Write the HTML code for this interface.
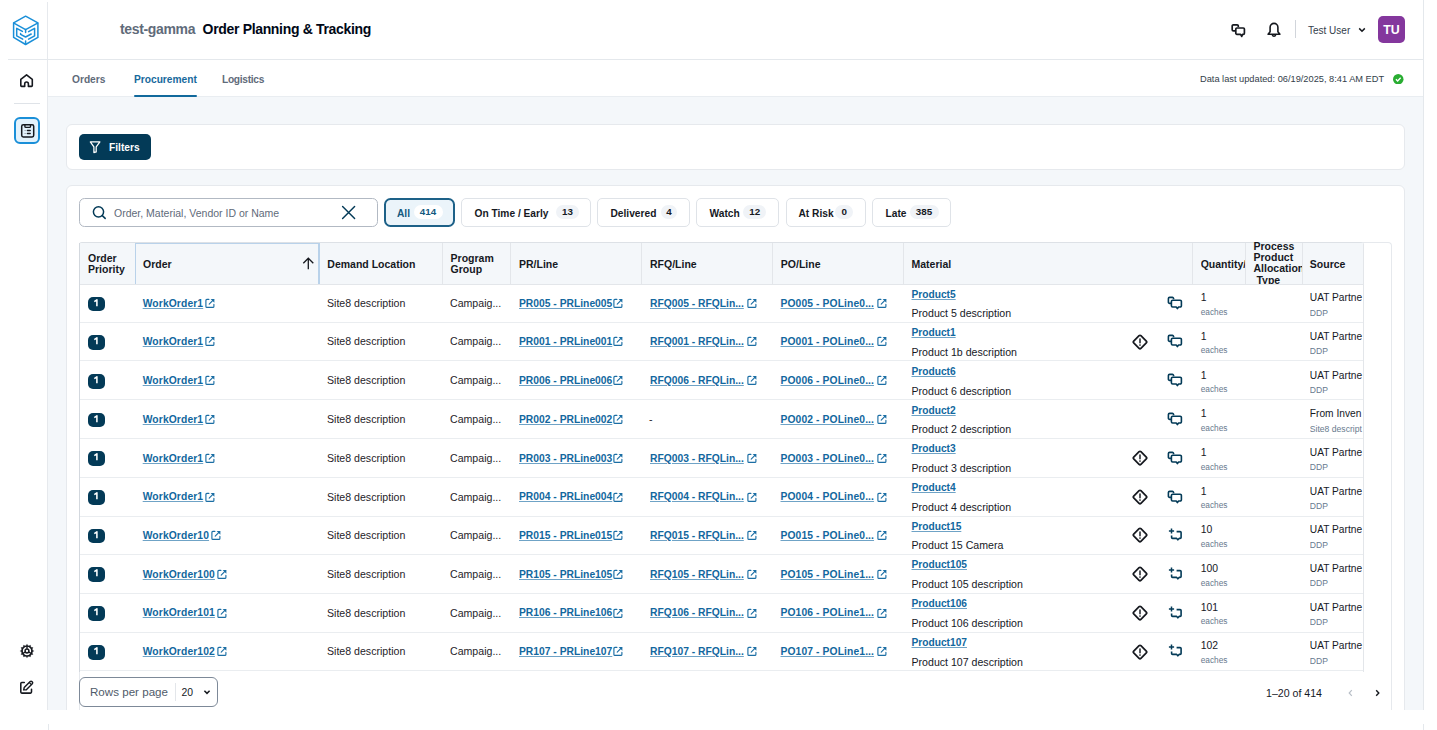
<!DOCTYPE html>
<html><head><meta charset="utf-8">
<style>
*{box-sizing:border-box;margin:0;padding:0}
html,body{width:1437px;height:730px;overflow:hidden;background:#fff;font-family:"Liberation Sans",sans-serif;color:#16191f}
.abs{position:absolute}
a{text-decoration:none}
#side{position:absolute;left:0;top:2px;width:48px;height:708px;background:#fff;border-right:1px solid #e6e9ed}
#hdr{position:absolute;left:48px;top:0;width:1375px;height:60px;background:#fff}
#hline{position:absolute;left:8px;top:59px;width:1415px;height:1px;background:#e4e8ec}
#rline{position:absolute;left:1423px;top:0;width:1px;height:710px;background:#e4e8ec}
#tabs{position:absolute;left:48px;top:60px;width:1375px;height:36px;background:#fff}
#gray{position:absolute;left:48px;top:96px;width:1375px;height:614px;background:#f4f7fa;border-top:1px solid #e9edf1}
.card{position:absolute;background:#fff;border:1px solid #e6e9ed;border-radius:6px}
.tab{position:absolute;top:74px;font-size:10.2px;font-weight:700;line-height:12px;color:#5f6b7a;white-space:nowrap}
.chip{position:absolute;top:198px;height:29px;border:1px solid #dfe3e8;border-radius:5px;background:#fff}
.chip .t{position:absolute;top:9px;font-size:10.2px;font-weight:700;line-height:12px;color:#16191f;white-space:nowrap}
.chip .b{position:absolute;top:5.6px;height:14px;border-radius:7px;background:#f0f3f7;font-size:9.8px;font-weight:700;line-height:14px;text-align:center;color:#16191f}
#tbl{position:absolute;left:79px;top:242px;width:1285px;height:430px;overflow:hidden;border-left:1px solid #dde1e6;border-right:1px solid #e3e6ea;border-top-left-radius:3px;border-top-right-radius:3px}
#outer{position:absolute;left:79px;top:242px;width:1313px;height:468px;border:1px solid #e6e9ed;border-bottom:none;border-radius:4px 4px 0 0}
#thead{position:absolute;left:0;top:0;width:1284px;height:43px;background:#f4f7fa;border-top:1px solid #dde1e6;border-bottom:1px solid #e3e6ea}
.cb{position:absolute;top:0;width:1px;height:43px;background:#e3e6ea}
.th{position:absolute;font-size:10.5px;font-weight:700;line-height:11.5px;color:#16191f;white-space:nowrap}
.row{position:absolute;left:79px;width:1284px;border-bottom:1px solid #eaedf0;background:#fff}
.badge{position:absolute;left:8.5px;top:calc(50% - 6.4px);width:17px;height:14.6px;border-radius:5px;background:#033a57;color:#fff;font-size:9.5px;font-weight:700;line-height:14.6px;text-align:center}
.lk{position:absolute;top:calc(50% - 5.2px);font-size:10.3px;font-weight:700;line-height:12px;color:#12679e;text-decoration:underline;text-decoration-thickness:1px;text-underline-offset:0.6px;text-decoration-color:#6fa3c6;white-space:nowrap}
.exti{position:absolute;top:calc(50% - 5px);width:10px;height:10px;color:#1b6ea4}
.exti svg{display:block}
.tx{position:absolute;top:calc(50% - 6px);font-size:10.6px;line-height:12px;color:#1f2329;white-space:nowrap}
.mat{position:absolute;left:832.5px;top:0;height:100%;width:300px}
.lk2{position:absolute;left:0;top:calc(50% - 14.3px);font-size:10.2px;font-weight:700;line-height:12px;color:#12679e;text-decoration:underline;text-decoration-thickness:1px;text-underline-offset:0.6px;text-decoration-color:#6fa3c6;white-space:nowrap}
.desc{position:absolute;left:0;top:calc(50% + 4.2px);font-size:10.6px;line-height:12px;color:#16191f;white-space:nowrap}
.dia{position:absolute;left:1052.5px;top:calc(50% - 7.8px);width:16px;height:16px}
.ic{position:absolute;left:1088px;top:calc(50% - 8px);width:16px;height:16px}
.qty{position:absolute;left:1121.7px;top:0;height:100%;width:50px}
.q1{position:absolute;left:0;top:calc(50% - 10.9px);font-size:10.4px;line-height:12px;color:#16191f;white-space:nowrap}
.q2{position:absolute;left:0;top:calc(50% + 2.9px);font-size:8.3px;line-height:12px;color:#687a8e;white-space:nowrap}
.src{position:absolute;left:1230.8px;top:0;height:100%;width:53px;overflow:hidden}
.s1{position:absolute;left:0;top:calc(50% - 10.9px);font-size:10.2px;line-height:12px;color:#16191f;white-space:nowrap}
.s2{position:absolute;left:0;top:calc(50% + 3.4px);font-size:8.6px;line-height:12px;color:#687a8e;white-space:nowrap}
</style></head><body>

<!-- sidebar -->
<div id="side"></div>
<div id="hdr"></div>
<div id="hline"></div>
<div id="rline"></div>
<div id="tabs"></div>
<div id="gray"></div>
<div class="abs" style="left:48px;top:724px;width:1px;height:6px;background:#e4e8ec"></div>
<div class="abs" style="left:1423px;top:724px;width:1px;height:6px;background:#e4e8ec"></div>

<!-- logo -->
<svg class="abs" style="left:12px;top:14px" width="28" height="33" viewBox="12 14 28 33">
 <g fill="none" stroke="#1a8fd8" stroke-width="1.5" stroke-linejoin="round" stroke-linecap="round">
  <path d="M25.6 16.2L37.9 22.8V37.4L25.6 44.5L13.6 37.4V22.8Z"/>
  <path d="M13.9 23.2L25.6 29.6L37.6 23.2"/>
  <path d="M25.6 29.6V32.4M25.6 40.9V44.3"/>
  <path d="M22.4 31.4L16.7 28.3V35.8L22.7 39.2"/>
  <path d="M28.6 31.7L34.6 28.3V35.8L28.6 39.2"/>
  <path d="M20.6 33.5V34.3L25.6 37L31.2 34"/>
 </g>
</svg>
<!-- home -->
<svg class="abs" style="left:18px;top:72px" width="17" height="17" viewBox="0 0 17 17">
 <path d="M2.8 7.4L8.55 2.9L14.3 7.4V13.6A0.8 0.8 0 0 1 13.5 14.4H10.4V11.9A1.85 1.85 0 0 0 6.7 11.9V14.4H3.6A0.8 0.8 0 0 1 2.8 13.6Z" fill="none" stroke="#16191f" stroke-width="1.6" stroke-linejoin="round"/>
</svg>
<div class="abs" style="left:14px;top:103px;width:26px;height:1px;background:#dfe3e8"></div>
<div class="abs" style="left:14px;top:117px;width:26px;height:27px;border:2px solid #1a8fd8;border-radius:6px;background:#e3f2fc"></div>
<svg class="abs" style="left:19px;top:122px" width="17" height="17" viewBox="0 0 17 17">
 <rect x="2.7" y="2.7" width="12" height="12.2" rx="1.6" fill="none" stroke="#16191f" stroke-width="1.5"/>
 <path d="M5.9 2V4.4A1 1 0 0 0 6.9 5.4H10.5A1 1 0 0 0 11.5 4.4V2" fill="none" stroke="#16191f" stroke-width="1.4"/>
 <path d="M5.6 8.5H6.6M5.6 11.5H6.6" stroke="#8a9099" stroke-width="1.2"/>
 <path d="M8.4 8.5H11.2M8.4 11.5H11.2" stroke="#16191f" stroke-width="1.4" stroke-linecap="round"/>
</svg>
<!-- gear -->
<svg class="abs" style="left:18.85px;top:643.4px" width="16" height="16" viewBox="0 0 16 16">
 <path d="M6.97 2.70L8.00 0.70L9.03 2.70ZM9.76 2.89L11.65 1.68L11.54 3.92ZM12.08 4.46L14.32 4.35L13.11 6.24ZM13.30 6.97L15.30 8.00L13.30 9.03ZM13.11 9.76L14.32 11.65L12.08 11.54ZM11.54 12.08L11.65 14.32L9.76 13.11ZM9.03 13.30L8.00 15.30L6.97 13.30ZM6.24 13.11L4.35 14.32L4.46 12.08ZM3.92 11.54L1.68 11.65L2.89 9.76ZM2.70 9.03L0.70 8.00L2.70 6.97ZM2.89 6.24L1.68 4.35L3.92 4.46ZM4.46 3.92L4.35 1.68L6.24 2.89Z" fill="#16191f"/>
 <circle cx="8" cy="8" r="5" fill="none" stroke="#16191f" stroke-width="1.7"/>
 <circle cx="8" cy="8" r="1.9" fill="none" stroke="#16191f" stroke-width="1.5"/>
 <path d="M8.00 5.80L8.00 3.00M6.09 9.10L3.67 10.50M9.91 9.10L12.33 10.50" stroke="#16191f" stroke-width="1.4"/>
</svg>
<!-- edit -->
<svg class="abs" style="left:19px;top:679px" width="16" height="16" viewBox="0 0 16 16">
 <path d="M5.3 3.4H2.8A1 1 0 0 0 1.8 4.4V13.1A1 1 0 0 0 2.8 14.1H11.5A1 1 0 0 0 12.5 13.1V10.2" fill="none" stroke="#16191f" stroke-width="1.55" stroke-linecap="round"/>
 <path d="M4.7 10.9L5.2 8.6L11.2 2.6A1.2 1.2 0 0 1 12.9 2.6L13.3 3A1.2 1.2 0 0 1 13.3 4.7L7.3 10.7Z" fill="none" stroke="#16191f" stroke-width="1.45" stroke-linejoin="round"/>
 <path d="M10.3 3.5L12.4 5.6" stroke="#16191f" stroke-width="1.2"/>
</svg>

<!-- header title -->
<div class="abs" style="left:120px;top:21.2px;font-size:14px;font-weight:700;line-height:16px;letter-spacing:-0.35px;white-space:nowrap"><span style="color:#5f6b7a">test-gamma</span><span style="display:inline-block;width:7.5px"></span><span style="color:#000716;letter-spacing:-0.33px">Order Planning &amp; Tracking</span></div>

<!-- header right -->
<svg class="abs" style="left:1230px;top:22px" width="17" height="17" viewBox="0 0 17 17">
 <path d="M8.3 5.1V4A1.2 1.2 0 0 0 7.1 2.8H3.4A1.2 1.2 0 0 0 2.2 4V7.7A1.2 1.2 0 0 0 3.4 8.9H5.6" fill="none" stroke="#16191f" stroke-width="1.7"/>
 <path d="M6.9 6H13.3A1.1 1.1 0 0 1 14.4 7.1V11.2A1.1 1.1 0 0 1 13.3 12.3H12.6L11.7 14.4L10.6 12.3H6.9A1.1 1.1 0 0 1 5.8 11.2V7.1A1.1 1.1 0 0 1 6.9 6Z" fill="none" stroke="#16191f" stroke-width="1.7" stroke-linejoin="round"/>
</svg>
<svg class="abs" style="left:1266px;top:21.6px" width="16" height="17" viewBox="0 0 16 17">
 <path d="M8 1.4A3.9 3.9 0 0 0 4.1 5.3V9.7L2.1 12.2H13.9L11.9 9.7V5.3A3.9 3.9 0 0 0 8 1.4Z" fill="none" stroke="#16191f" stroke-width="1.6" stroke-linejoin="round"/>
 <path d="M6.3 13.1A1.8 1.8 0 0 0 9.7 13.1" fill="none" stroke="#16191f" stroke-width="1.6"/>
</svg>
<div class="abs" style="left:1295px;top:20px;width:1px;height:18px;background:#d1d5db"></div>
<div class="abs" style="left:1308px;top:24.6px;font-size:10px;line-height:12px;color:#333d4b;white-space:nowrap">Test User</div>
<svg class="abs" style="left:1358px;top:27px" width="8" height="6" viewBox="0 0 8 6"><path d="M1.2 1.4L4 4.2L6.8 1.4" fill="none" stroke="#16191f" stroke-width="1.5"/></svg>
<div class="abs" style="left:1378px;top:16px;width:27px;height:27px;border-radius:5px;background:#84379d;color:#fff;font-size:12.4px;font-weight:700;line-height:29px;text-align:center;overflow:hidden">TU</div>

<!-- tabs -->
<div class="tab" style="left:72px">Orders</div>
<div class="tab" style="left:134px;color:#17699c">Procurement</div>
<div class="abs" style="left:134px;top:94.8px;width:63px;height:2px;border-radius:1px;background:#11699c"></div>
<div class="tab" style="left:222px;letter-spacing:-0.3px">Logistics</div>
<div class="abs" style="left:1200px;top:73px;font-size:9.25px;line-height:12px;color:#333e4a;white-space:nowrap">Data last updated: 06/19/2025, 8:41 AM EDT</div>
<svg class="abs" style="left:1393px;top:73.5px" width="10.5" height="10.5" viewBox="0 0 10 10"><circle cx="5" cy="5" r="5" fill="#29ad32"/><path d="M2.8 5.1L4.4 6.6L7.3 3.6" fill="none" stroke="#fff" stroke-width="1.3"/></svg>

<!-- filter card -->
<div class="card" style="left:66px;top:124px;width:1339px;height:46px"></div>
<div class="abs" style="left:79px;top:134px;width:72px;height:26px;border-radius:5px;background:#033a57"></div>
<svg class="abs" style="left:88px;top:140px" width="14" height="14" viewBox="0 0 14 14"><path d="M2.3 1.9H11.9L8.2 6.9V11.9L5.9 12.6V6.9Z" fill="none" stroke="#fff" stroke-width="1.25" stroke-linejoin="round"/></svg>
<div class="abs" style="left:109px;top:142px;font-size:10.2px;font-weight:700;line-height:12px;color:#fff">Filters</div>

<!-- table card -->
<div class="card" style="left:66px;top:185px;width:1339px;height:560px"></div>
<div class="abs" style="left:79px;top:198px;width:299px;height:29.4px;border:1px solid #b2b9c3;border-radius:5.5px;background:#fff"></div>
<svg class="abs" style="left:91.5px;top:205px" width="15" height="15" viewBox="0 0 15 15"><circle cx="6.5" cy="6.8" r="5.1" fill="none" stroke="#033a57" stroke-width="1.5"/><path d="M10.3 10.6L13.2 13.4" stroke="#033a57" stroke-width="1.5" stroke-linecap="round"/></svg>
<div class="abs" style="left:114px;top:207px;font-size:10.5px;line-height:12px;color:#5f6b7a;white-space:nowrap">Order, Material, Vendor ID or Name</div>
<svg class="abs" style="left:341px;top:204.6px" width="15" height="15" viewBox="0 0 15 15"><path d="M1.6 1.6L13.6 13.6M13.6 1.6L1.6 13.6" stroke="#033a57" stroke-width="1.45" stroke-linecap="round"/></svg>

<div class="chip" style="left:384px;width:71px;border:2px solid #1d6188;border-radius:6.5px;background:#ebf4fa"><span class="t" style="left:11px;top:8px;color:#145a7f">All</span><span class="b" style="left:27.5px;top:4.5px;width:29px;background:#fff;color:#145a7f">414</span></div>
<div class="chip" style="left:461px;width:130px"><span class="t" style="left:12.5px">On Time / Early</span><span class="b" style="left:94px;width:23px">13</span></div>
<div class="chip" style="left:597px;width:93px"><span class="t" style="left:12.5px">Delivered</span><span class="b" style="left:63px;width:16px">4</span></div>
<div class="chip" style="left:696px;width:83px"><span class="t" style="left:12.5px">Watch</span><span class="b" style="left:46.3px;width:23px">12</span></div>
<div class="chip" style="left:785.5px;width:80px"><span class="t" style="left:12px">At Risk</span><span class="b" style="left:48.8px;width:18px">0</span></div>
<div class="chip" style="left:872px;width:78.5px"><span class="t" style="left:12.5px">Late</span><span class="b" style="left:36.5px;width:29px">385</span></div>

<!-- table -->
<div id="outer"></div>
<div id="tbl">
 <div id="thead"><div class="cb" style="left:55px"></div><div class="cb" style="left:239px"></div><div class="cb" style="left:362px"></div><div class="cb" style="left:430px"></div><div class="cb" style="left:561px"></div><div class="cb" style="left:692px"></div><div class="cb" style="left:823px"></div><div class="cb" style="left:1112px"></div><div class="cb" style="left:1165px"></div><div class="cb" style="left:1222px"></div></div>
</div>
<div class="th" style="left:88px;top:252.6px">Order<br>Priority</div>
<div class="abs" style="left:135px;top:243px;width:185px;height:41px;border:1px solid #b9d2ea;border-width:1px 2px 0 1px;background:#f4f7fa"></div>
<div class="th" style="left:143px;top:259px">Order</div>
<svg class="abs" style="left:302px;top:257px" width="12" height="13" viewBox="0 0 12 13"><path d="M6.3 1.4V12.2M1.3 6.2L6.3 1.2L11.3 6.2" fill="none" stroke="#16191f" stroke-width="1.3"/></svg>
<div class="th" style="left:327.3px;top:259px">Demand Location</div>
<div class="th" style="left:450.6px;top:252.6px">Program<br>Group</div>
<div class="th" style="left:519px;top:259px">PR/Line</div>
<div class="th" style="left:650px;top:259px">RFQ/Line</div>
<div class="th" style="left:780.8px;top:259px">PO/Line</div>
<div class="th" style="left:911.5px;top:259px">Material</div>
<div class="abs" style="left:1200.7px;top:259px;width:44px;overflow:hidden"><div class="th" style="position:static">Quantity/</div></div>
<div class="abs" style="left:1253px;top:242px;width:49px;height:42px;overflow:hidden"><div class="th" style="position:absolute;left:0.5px;top:-1.3px;line-height:11.3px">Process<br>Product<br>Allocation<br>&nbsp;Type</div></div>
<div class="th" style="left:1309.8px;top:259px">Source</div>

<div class="row" style="top:285px;height:37.5px">
<div class="badge"><svg width="17" height="15" viewBox="0 0 17 15" style="display:block"><path d="M6.3 4.7L8.9 2.8V9.3" fill="none" stroke="#fff" stroke-width="1.55" stroke-linejoin="round"/></svg></div>
<a class="lk" style="left:63.7px;letter-spacing:0.12px">WorkOrder1</a><div class="exti" style="left:125.75px"><svg class="ext" width="10" height="10" viewBox="0 0 10 10"><path d="M3.9 1.4H1.9A1 1 0 0 0 0.9 2.4V8.4A1 1 0 0 0 1.9 9.4H7.9A1 1 0 0 0 8.9 8.4V6.4" fill="none" stroke="currentColor" stroke-width="1.15" stroke-linecap="round"/><path d="M4.2 6.1L8.6 1.7" stroke="currentColor" stroke-width="1.15" stroke-linecap="round"/><path d="M5.6 0.9H9.4V4.7Z" fill="currentColor"/></svg></div>
<span class="tx" style="left:248px">Site8 description</span>
<span class="tx" style="left:371px">Campaig...</span>
<a class="lk" style="left:440px">PR005 - PRLine005</a><div class="exti" style="left:533.85px"><svg class="ext" width="10" height="10" viewBox="0 0 10 10"><path d="M3.9 1.4H1.9A1 1 0 0 0 0.9 2.4V8.4A1 1 0 0 0 1.9 9.4H7.9A1 1 0 0 0 8.9 8.4V6.4" fill="none" stroke="currentColor" stroke-width="1.15" stroke-linecap="round"/><path d="M4.2 6.1L8.6 1.7" stroke="currentColor" stroke-width="1.15" stroke-linecap="round"/><path d="M5.6 0.9H9.4V4.7Z" fill="currentColor"/></svg></div>
<a class="lk" style="left:571px">RFQ005 - RFQLin...</a><div class="exti" style="left:667.65px"><svg class="ext" width="10" height="10" viewBox="0 0 10 10"><path d="M3.9 1.4H1.9A1 1 0 0 0 0.9 2.4V8.4A1 1 0 0 0 1.9 9.4H7.9A1 1 0 0 0 8.9 8.4V6.4" fill="none" stroke="currentColor" stroke-width="1.15" stroke-linecap="round"/><path d="M4.2 6.1L8.6 1.7" stroke="currentColor" stroke-width="1.15" stroke-linecap="round"/><path d="M5.6 0.9H9.4V4.7Z" fill="currentColor"/></svg></div>
<a class="lk" style="left:701.5px;letter-spacing:0.11px">PO005 - POLine0...</a><div class="exti" style="left:798.25px"><svg class="ext" width="10" height="10" viewBox="0 0 10 10"><path d="M3.9 1.4H1.9A1 1 0 0 0 0.9 2.4V8.4A1 1 0 0 0 1.9 9.4H7.9A1 1 0 0 0 8.9 8.4V6.4" fill="none" stroke="currentColor" stroke-width="1.15" stroke-linecap="round"/><path d="M4.2 6.1L8.6 1.7" stroke="currentColor" stroke-width="1.15" stroke-linecap="round"/><path d="M5.6 0.9H9.4V4.7Z" fill="currentColor"/></svg></div>
<div class="mat"><a class="lk2">Product5</a><div class="desc">Product 5 description</div></div>

<div class="ic"><svg width="16" height="16" viewBox="0 0 16 16"><path d="M6.6 4.2V3.6A1.2 1.2 0 0 0 5.4 2.4H2.6A1.2 1.2 0 0 0 1.4 3.6V7.2A1.2 1.2 0 0 0 2.6 8.4H4.4" fill="none" stroke="#033a57" stroke-width="1.6"/><path d="M5.6 5.2H13.2A1.2 1.2 0 0 1 14.4 6.4V10.8A1.2 1.2 0 0 1 13.2 12H11.6L10.4 13.6L9.2 12H5.6A1.2 1.2 0 0 1 4.4 10.8V6.4A1.2 1.2 0 0 1 5.6 5.2Z" fill="none" stroke="#033a57" stroke-width="1.6" stroke-linejoin="round"/></svg></div>
<div class="qty"><div class="q1">1</div><div class="q2">eaches</div></div>
<div class="src"><div class="s1">UAT Partne</div><div class="s2">DDP</div></div>
</div>
<div class="row" style="top:322.5px;height:38.89999999999998px">
<div class="badge"><svg width="17" height="15" viewBox="0 0 17 15" style="display:block"><path d="M6.3 4.7L8.9 2.8V9.3" fill="none" stroke="#fff" stroke-width="1.55" stroke-linejoin="round"/></svg></div>
<a class="lk" style="left:63.7px;letter-spacing:0.12px">WorkOrder1</a><div class="exti" style="left:125.75px"><svg class="ext" width="10" height="10" viewBox="0 0 10 10"><path d="M3.9 1.4H1.9A1 1 0 0 0 0.9 2.4V8.4A1 1 0 0 0 1.9 9.4H7.9A1 1 0 0 0 8.9 8.4V6.4" fill="none" stroke="currentColor" stroke-width="1.15" stroke-linecap="round"/><path d="M4.2 6.1L8.6 1.7" stroke="currentColor" stroke-width="1.15" stroke-linecap="round"/><path d="M5.6 0.9H9.4V4.7Z" fill="currentColor"/></svg></div>
<span class="tx" style="left:248px">Site8 description</span>
<span class="tx" style="left:371px">Campaig...</span>
<a class="lk" style="left:440px">PR001 - PRLine001</a><div class="exti" style="left:533.85px"><svg class="ext" width="10" height="10" viewBox="0 0 10 10"><path d="M3.9 1.4H1.9A1 1 0 0 0 0.9 2.4V8.4A1 1 0 0 0 1.9 9.4H7.9A1 1 0 0 0 8.9 8.4V6.4" fill="none" stroke="currentColor" stroke-width="1.15" stroke-linecap="round"/><path d="M4.2 6.1L8.6 1.7" stroke="currentColor" stroke-width="1.15" stroke-linecap="round"/><path d="M5.6 0.9H9.4V4.7Z" fill="currentColor"/></svg></div>
<a class="lk" style="left:571px">RFQ001 - RFQLin...</a><div class="exti" style="left:667.65px"><svg class="ext" width="10" height="10" viewBox="0 0 10 10"><path d="M3.9 1.4H1.9A1 1 0 0 0 0.9 2.4V8.4A1 1 0 0 0 1.9 9.4H7.9A1 1 0 0 0 8.9 8.4V6.4" fill="none" stroke="currentColor" stroke-width="1.15" stroke-linecap="round"/><path d="M4.2 6.1L8.6 1.7" stroke="currentColor" stroke-width="1.15" stroke-linecap="round"/><path d="M5.6 0.9H9.4V4.7Z" fill="currentColor"/></svg></div>
<a class="lk" style="left:701.5px;letter-spacing:0.11px">PO001 - POLine0...</a><div class="exti" style="left:798.25px"><svg class="ext" width="10" height="10" viewBox="0 0 10 10"><path d="M3.9 1.4H1.9A1 1 0 0 0 0.9 2.4V8.4A1 1 0 0 0 1.9 9.4H7.9A1 1 0 0 0 8.9 8.4V6.4" fill="none" stroke="currentColor" stroke-width="1.15" stroke-linecap="round"/><path d="M4.2 6.1L8.6 1.7" stroke="currentColor" stroke-width="1.15" stroke-linecap="round"/><path d="M5.6 0.9H9.4V4.7Z" fill="currentColor"/></svg></div>
<div class="mat"><a class="lk2">Product1</a><div class="desc">Product 1b description</div></div>
<div class="dia"><svg width="16" height="16" viewBox="0 0 16 16"><path d="M7.1 1.7Q8 0.8 8.9 1.7L14.3 7.1Q15.2 8 14.3 8.9L8.9 14.3Q8 15.2 7.1 14.3L1.7 8.9Q0.8 8 1.7 7.1Z" fill="none" stroke="#16191f" stroke-width="1.75" stroke-linejoin="round"/><path d="M8 4.9V8.7" stroke="#16191f" stroke-width="1.45" stroke-linecap="round"/><circle cx="8" cy="11" r="0.85" fill="#16191f"/></svg></div>
<div class="ic"><svg width="16" height="16" viewBox="0 0 16 16"><path d="M6.6 4.2V3.6A1.2 1.2 0 0 0 5.4 2.4H2.6A1.2 1.2 0 0 0 1.4 3.6V7.2A1.2 1.2 0 0 0 2.6 8.4H4.4" fill="none" stroke="#033a57" stroke-width="1.6"/><path d="M5.6 5.2H13.2A1.2 1.2 0 0 1 14.4 6.4V10.8A1.2 1.2 0 0 1 13.2 12H11.6L10.4 13.6L9.2 12H5.6A1.2 1.2 0 0 1 4.4 10.8V6.4A1.2 1.2 0 0 1 5.6 5.2Z" fill="none" stroke="#033a57" stroke-width="1.6" stroke-linejoin="round"/></svg></div>
<div class="qty"><div class="q1">1</div><div class="q2">eaches</div></div>
<div class="src"><div class="s1">UAT Partne</div><div class="s2">DDP</div></div>
</div>
<div class="row" style="top:361.4px;height:39.10000000000002px">
<div class="badge"><svg width="17" height="15" viewBox="0 0 17 15" style="display:block"><path d="M6.3 4.7L8.9 2.8V9.3" fill="none" stroke="#fff" stroke-width="1.55" stroke-linejoin="round"/></svg></div>
<a class="lk" style="left:63.7px;letter-spacing:0.12px">WorkOrder1</a><div class="exti" style="left:125.75px"><svg class="ext" width="10" height="10" viewBox="0 0 10 10"><path d="M3.9 1.4H1.9A1 1 0 0 0 0.9 2.4V8.4A1 1 0 0 0 1.9 9.4H7.9A1 1 0 0 0 8.9 8.4V6.4" fill="none" stroke="currentColor" stroke-width="1.15" stroke-linecap="round"/><path d="M4.2 6.1L8.6 1.7" stroke="currentColor" stroke-width="1.15" stroke-linecap="round"/><path d="M5.6 0.9H9.4V4.7Z" fill="currentColor"/></svg></div>
<span class="tx" style="left:248px">Site8 description</span>
<span class="tx" style="left:371px">Campaig...</span>
<a class="lk" style="left:440px">PR006 - PRLine006</a><div class="exti" style="left:533.85px"><svg class="ext" width="10" height="10" viewBox="0 0 10 10"><path d="M3.9 1.4H1.9A1 1 0 0 0 0.9 2.4V8.4A1 1 0 0 0 1.9 9.4H7.9A1 1 0 0 0 8.9 8.4V6.4" fill="none" stroke="currentColor" stroke-width="1.15" stroke-linecap="round"/><path d="M4.2 6.1L8.6 1.7" stroke="currentColor" stroke-width="1.15" stroke-linecap="round"/><path d="M5.6 0.9H9.4V4.7Z" fill="currentColor"/></svg></div>
<a class="lk" style="left:571px">RFQ006 - RFQLin...</a><div class="exti" style="left:667.65px"><svg class="ext" width="10" height="10" viewBox="0 0 10 10"><path d="M3.9 1.4H1.9A1 1 0 0 0 0.9 2.4V8.4A1 1 0 0 0 1.9 9.4H7.9A1 1 0 0 0 8.9 8.4V6.4" fill="none" stroke="currentColor" stroke-width="1.15" stroke-linecap="round"/><path d="M4.2 6.1L8.6 1.7" stroke="currentColor" stroke-width="1.15" stroke-linecap="round"/><path d="M5.6 0.9H9.4V4.7Z" fill="currentColor"/></svg></div>
<a class="lk" style="left:701.5px;letter-spacing:0.11px">PO006 - POLine0...</a><div class="exti" style="left:798.25px"><svg class="ext" width="10" height="10" viewBox="0 0 10 10"><path d="M3.9 1.4H1.9A1 1 0 0 0 0.9 2.4V8.4A1 1 0 0 0 1.9 9.4H7.9A1 1 0 0 0 8.9 8.4V6.4" fill="none" stroke="currentColor" stroke-width="1.15" stroke-linecap="round"/><path d="M4.2 6.1L8.6 1.7" stroke="currentColor" stroke-width="1.15" stroke-linecap="round"/><path d="M5.6 0.9H9.4V4.7Z" fill="currentColor"/></svg></div>
<div class="mat"><a class="lk2">Product6</a><div class="desc">Product 6 description</div></div>

<div class="ic"><svg width="16" height="16" viewBox="0 0 16 16"><path d="M6.6 4.2V3.6A1.2 1.2 0 0 0 5.4 2.4H2.6A1.2 1.2 0 0 0 1.4 3.6V7.2A1.2 1.2 0 0 0 2.6 8.4H4.4" fill="none" stroke="#033a57" stroke-width="1.6"/><path d="M5.6 5.2H13.2A1.2 1.2 0 0 1 14.4 6.4V10.8A1.2 1.2 0 0 1 13.2 12H11.6L10.4 13.6L9.2 12H5.6A1.2 1.2 0 0 1 4.4 10.8V6.4A1.2 1.2 0 0 1 5.6 5.2Z" fill="none" stroke="#033a57" stroke-width="1.6" stroke-linejoin="round"/></svg></div>
<div class="qty"><div class="q1">1</div><div class="q2">eaches</div></div>
<div class="src"><div class="s1">UAT Partne</div><div class="s2">DDP</div></div>
</div>
<div class="row" style="top:400.5px;height:38.5px">
<div class="badge"><svg width="17" height="15" viewBox="0 0 17 15" style="display:block"><path d="M6.3 4.7L8.9 2.8V9.3" fill="none" stroke="#fff" stroke-width="1.55" stroke-linejoin="round"/></svg></div>
<a class="lk" style="left:63.7px;letter-spacing:0.12px">WorkOrder1</a><div class="exti" style="left:125.75px"><svg class="ext" width="10" height="10" viewBox="0 0 10 10"><path d="M3.9 1.4H1.9A1 1 0 0 0 0.9 2.4V8.4A1 1 0 0 0 1.9 9.4H7.9A1 1 0 0 0 8.9 8.4V6.4" fill="none" stroke="currentColor" stroke-width="1.15" stroke-linecap="round"/><path d="M4.2 6.1L8.6 1.7" stroke="currentColor" stroke-width="1.15" stroke-linecap="round"/><path d="M5.6 0.9H9.4V4.7Z" fill="currentColor"/></svg></div>
<span class="tx" style="left:248px">Site8 description</span>
<span class="tx" style="left:371px">Campaig...</span>
<a class="lk" style="left:440px">PR002 - PRLine002</a><div class="exti" style="left:533.85px"><svg class="ext" width="10" height="10" viewBox="0 0 10 10"><path d="M3.9 1.4H1.9A1 1 0 0 0 0.9 2.4V8.4A1 1 0 0 0 1.9 9.4H7.9A1 1 0 0 0 8.9 8.4V6.4" fill="none" stroke="currentColor" stroke-width="1.15" stroke-linecap="round"/><path d="M4.2 6.1L8.6 1.7" stroke="currentColor" stroke-width="1.15" stroke-linecap="round"/><path d="M5.6 0.9H9.4V4.7Z" fill="currentColor"/></svg></div>
<span class="tx" style="left:570px">-</span>
<a class="lk" style="left:701.5px;letter-spacing:0.11px">PO002 - POLine0...</a><div class="exti" style="left:798.25px"><svg class="ext" width="10" height="10" viewBox="0 0 10 10"><path d="M3.9 1.4H1.9A1 1 0 0 0 0.9 2.4V8.4A1 1 0 0 0 1.9 9.4H7.9A1 1 0 0 0 8.9 8.4V6.4" fill="none" stroke="currentColor" stroke-width="1.15" stroke-linecap="round"/><path d="M4.2 6.1L8.6 1.7" stroke="currentColor" stroke-width="1.15" stroke-linecap="round"/><path d="M5.6 0.9H9.4V4.7Z" fill="currentColor"/></svg></div>
<div class="mat"><a class="lk2">Product2</a><div class="desc">Product 2 description</div></div>

<div class="ic"><svg width="16" height="16" viewBox="0 0 16 16"><path d="M6.6 4.2V3.6A1.2 1.2 0 0 0 5.4 2.4H2.6A1.2 1.2 0 0 0 1.4 3.6V7.2A1.2 1.2 0 0 0 2.6 8.4H4.4" fill="none" stroke="#033a57" stroke-width="1.6"/><path d="M5.6 5.2H13.2A1.2 1.2 0 0 1 14.4 6.4V10.8A1.2 1.2 0 0 1 13.2 12H11.6L10.4 13.6L9.2 12H5.6A1.2 1.2 0 0 1 4.4 10.8V6.4A1.2 1.2 0 0 1 5.6 5.2Z" fill="none" stroke="#033a57" stroke-width="1.6" stroke-linejoin="round"/></svg></div>
<div class="qty"><div class="q1">1</div><div class="q2">eaches</div></div>
<div class="src"><div class="s1">From Inven</div><div class="s2">Site8 descript</div></div>
</div>
<div class="row" style="top:439px;height:38.5px">
<div class="badge"><svg width="17" height="15" viewBox="0 0 17 15" style="display:block"><path d="M6.3 4.7L8.9 2.8V9.3" fill="none" stroke="#fff" stroke-width="1.55" stroke-linejoin="round"/></svg></div>
<a class="lk" style="left:63.7px;letter-spacing:0.12px">WorkOrder1</a><div class="exti" style="left:125.75px"><svg class="ext" width="10" height="10" viewBox="0 0 10 10"><path d="M3.9 1.4H1.9A1 1 0 0 0 0.9 2.4V8.4A1 1 0 0 0 1.9 9.4H7.9A1 1 0 0 0 8.9 8.4V6.4" fill="none" stroke="currentColor" stroke-width="1.15" stroke-linecap="round"/><path d="M4.2 6.1L8.6 1.7" stroke="currentColor" stroke-width="1.15" stroke-linecap="round"/><path d="M5.6 0.9H9.4V4.7Z" fill="currentColor"/></svg></div>
<span class="tx" style="left:248px">Site8 description</span>
<span class="tx" style="left:371px">Campaig...</span>
<a class="lk" style="left:440px">PR003 - PRLine003</a><div class="exti" style="left:533.85px"><svg class="ext" width="10" height="10" viewBox="0 0 10 10"><path d="M3.9 1.4H1.9A1 1 0 0 0 0.9 2.4V8.4A1 1 0 0 0 1.9 9.4H7.9A1 1 0 0 0 8.9 8.4V6.4" fill="none" stroke="currentColor" stroke-width="1.15" stroke-linecap="round"/><path d="M4.2 6.1L8.6 1.7" stroke="currentColor" stroke-width="1.15" stroke-linecap="round"/><path d="M5.6 0.9H9.4V4.7Z" fill="currentColor"/></svg></div>
<a class="lk" style="left:571px">RFQ003 - RFQLin...</a><div class="exti" style="left:667.65px"><svg class="ext" width="10" height="10" viewBox="0 0 10 10"><path d="M3.9 1.4H1.9A1 1 0 0 0 0.9 2.4V8.4A1 1 0 0 0 1.9 9.4H7.9A1 1 0 0 0 8.9 8.4V6.4" fill="none" stroke="currentColor" stroke-width="1.15" stroke-linecap="round"/><path d="M4.2 6.1L8.6 1.7" stroke="currentColor" stroke-width="1.15" stroke-linecap="round"/><path d="M5.6 0.9H9.4V4.7Z" fill="currentColor"/></svg></div>
<a class="lk" style="left:701.5px;letter-spacing:0.11px">PO003 - POLine0...</a><div class="exti" style="left:798.25px"><svg class="ext" width="10" height="10" viewBox="0 0 10 10"><path d="M3.9 1.4H1.9A1 1 0 0 0 0.9 2.4V8.4A1 1 0 0 0 1.9 9.4H7.9A1 1 0 0 0 8.9 8.4V6.4" fill="none" stroke="currentColor" stroke-width="1.15" stroke-linecap="round"/><path d="M4.2 6.1L8.6 1.7" stroke="currentColor" stroke-width="1.15" stroke-linecap="round"/><path d="M5.6 0.9H9.4V4.7Z" fill="currentColor"/></svg></div>
<div class="mat"><a class="lk2">Product3</a><div class="desc">Product 3 description</div></div>
<div class="dia"><svg width="16" height="16" viewBox="0 0 16 16"><path d="M7.1 1.7Q8 0.8 8.9 1.7L14.3 7.1Q15.2 8 14.3 8.9L8.9 14.3Q8 15.2 7.1 14.3L1.7 8.9Q0.8 8 1.7 7.1Z" fill="none" stroke="#16191f" stroke-width="1.75" stroke-linejoin="round"/><path d="M8 4.9V8.7" stroke="#16191f" stroke-width="1.45" stroke-linecap="round"/><circle cx="8" cy="11" r="0.85" fill="#16191f"/></svg></div>
<div class="ic"><svg width="16" height="16" viewBox="0 0 16 16"><path d="M6.6 4.2V3.6A1.2 1.2 0 0 0 5.4 2.4H2.6A1.2 1.2 0 0 0 1.4 3.6V7.2A1.2 1.2 0 0 0 2.6 8.4H4.4" fill="none" stroke="#033a57" stroke-width="1.6"/><path d="M5.6 5.2H13.2A1.2 1.2 0 0 1 14.4 6.4V10.8A1.2 1.2 0 0 1 13.2 12H11.6L10.4 13.6L9.2 12H5.6A1.2 1.2 0 0 1 4.4 10.8V6.4A1.2 1.2 0 0 1 5.6 5.2Z" fill="none" stroke="#033a57" stroke-width="1.6" stroke-linejoin="round"/></svg></div>
<div class="qty"><div class="q1">1</div><div class="q2">eaches</div></div>
<div class="src"><div class="s1">UAT Partne</div><div class="s2">DDP</div></div>
</div>
<div class="row" style="top:477.5px;height:39.0px">
<div class="badge"><svg width="17" height="15" viewBox="0 0 17 15" style="display:block"><path d="M6.3 4.7L8.9 2.8V9.3" fill="none" stroke="#fff" stroke-width="1.55" stroke-linejoin="round"/></svg></div>
<a class="lk" style="left:63.7px;letter-spacing:0.12px">WorkOrder1</a><div class="exti" style="left:125.75px"><svg class="ext" width="10" height="10" viewBox="0 0 10 10"><path d="M3.9 1.4H1.9A1 1 0 0 0 0.9 2.4V8.4A1 1 0 0 0 1.9 9.4H7.9A1 1 0 0 0 8.9 8.4V6.4" fill="none" stroke="currentColor" stroke-width="1.15" stroke-linecap="round"/><path d="M4.2 6.1L8.6 1.7" stroke="currentColor" stroke-width="1.15" stroke-linecap="round"/><path d="M5.6 0.9H9.4V4.7Z" fill="currentColor"/></svg></div>
<span class="tx" style="left:248px">Site8 description</span>
<span class="tx" style="left:371px">Campaig...</span>
<a class="lk" style="left:440px">PR004 - PRLine004</a><div class="exti" style="left:533.85px"><svg class="ext" width="10" height="10" viewBox="0 0 10 10"><path d="M3.9 1.4H1.9A1 1 0 0 0 0.9 2.4V8.4A1 1 0 0 0 1.9 9.4H7.9A1 1 0 0 0 8.9 8.4V6.4" fill="none" stroke="currentColor" stroke-width="1.15" stroke-linecap="round"/><path d="M4.2 6.1L8.6 1.7" stroke="currentColor" stroke-width="1.15" stroke-linecap="round"/><path d="M5.6 0.9H9.4V4.7Z" fill="currentColor"/></svg></div>
<a class="lk" style="left:571px">RFQ004 - RFQLin...</a><div class="exti" style="left:667.65px"><svg class="ext" width="10" height="10" viewBox="0 0 10 10"><path d="M3.9 1.4H1.9A1 1 0 0 0 0.9 2.4V8.4A1 1 0 0 0 1.9 9.4H7.9A1 1 0 0 0 8.9 8.4V6.4" fill="none" stroke="currentColor" stroke-width="1.15" stroke-linecap="round"/><path d="M4.2 6.1L8.6 1.7" stroke="currentColor" stroke-width="1.15" stroke-linecap="round"/><path d="M5.6 0.9H9.4V4.7Z" fill="currentColor"/></svg></div>
<a class="lk" style="left:701.5px;letter-spacing:0.11px">PO004 - POLine0...</a><div class="exti" style="left:798.25px"><svg class="ext" width="10" height="10" viewBox="0 0 10 10"><path d="M3.9 1.4H1.9A1 1 0 0 0 0.9 2.4V8.4A1 1 0 0 0 1.9 9.4H7.9A1 1 0 0 0 8.9 8.4V6.4" fill="none" stroke="currentColor" stroke-width="1.15" stroke-linecap="round"/><path d="M4.2 6.1L8.6 1.7" stroke="currentColor" stroke-width="1.15" stroke-linecap="round"/><path d="M5.6 0.9H9.4V4.7Z" fill="currentColor"/></svg></div>
<div class="mat"><a class="lk2">Product4</a><div class="desc">Product 4 description</div></div>
<div class="dia"><svg width="16" height="16" viewBox="0 0 16 16"><path d="M7.1 1.7Q8 0.8 8.9 1.7L14.3 7.1Q15.2 8 14.3 8.9L8.9 14.3Q8 15.2 7.1 14.3L1.7 8.9Q0.8 8 1.7 7.1Z" fill="none" stroke="#16191f" stroke-width="1.75" stroke-linejoin="round"/><path d="M8 4.9V8.7" stroke="#16191f" stroke-width="1.45" stroke-linecap="round"/><circle cx="8" cy="11" r="0.85" fill="#16191f"/></svg></div>
<div class="ic"><svg width="16" height="16" viewBox="0 0 16 16"><path d="M6.6 4.2V3.6A1.2 1.2 0 0 0 5.4 2.4H2.6A1.2 1.2 0 0 0 1.4 3.6V7.2A1.2 1.2 0 0 0 2.6 8.4H4.4" fill="none" stroke="#033a57" stroke-width="1.6"/><path d="M5.6 5.2H13.2A1.2 1.2 0 0 1 14.4 6.4V10.8A1.2 1.2 0 0 1 13.2 12H11.6L10.4 13.6L9.2 12H5.6A1.2 1.2 0 0 1 4.4 10.8V6.4A1.2 1.2 0 0 1 5.6 5.2Z" fill="none" stroke="#033a57" stroke-width="1.6" stroke-linejoin="round"/></svg></div>
<div class="qty"><div class="q1">1</div><div class="q2">eaches</div></div>
<div class="src"><div class="s1">UAT Partne</div><div class="s2">DDP</div></div>
</div>
<div class="row" style="top:516.5px;height:38.5px">
<div class="badge"><svg width="17" height="15" viewBox="0 0 17 15" style="display:block"><path d="M6.3 4.7L8.9 2.8V9.3" fill="none" stroke="#fff" stroke-width="1.55" stroke-linejoin="round"/></svg></div>
<a class="lk" style="left:63.7px;letter-spacing:0.12px">WorkOrder10</a><div class="exti" style="left:132.05px"><svg class="ext" width="10" height="10" viewBox="0 0 10 10"><path d="M3.9 1.4H1.9A1 1 0 0 0 0.9 2.4V8.4A1 1 0 0 0 1.9 9.4H7.9A1 1 0 0 0 8.9 8.4V6.4" fill="none" stroke="currentColor" stroke-width="1.15" stroke-linecap="round"/><path d="M4.2 6.1L8.6 1.7" stroke="currentColor" stroke-width="1.15" stroke-linecap="round"/><path d="M5.6 0.9H9.4V4.7Z" fill="currentColor"/></svg></div>
<span class="tx" style="left:248px">Site8 description</span>
<span class="tx" style="left:371px">Campaig...</span>
<a class="lk" style="left:440px">PR015 - PRLine015</a><div class="exti" style="left:533.85px"><svg class="ext" width="10" height="10" viewBox="0 0 10 10"><path d="M3.9 1.4H1.9A1 1 0 0 0 0.9 2.4V8.4A1 1 0 0 0 1.9 9.4H7.9A1 1 0 0 0 8.9 8.4V6.4" fill="none" stroke="currentColor" stroke-width="1.15" stroke-linecap="round"/><path d="M4.2 6.1L8.6 1.7" stroke="currentColor" stroke-width="1.15" stroke-linecap="round"/><path d="M5.6 0.9H9.4V4.7Z" fill="currentColor"/></svg></div>
<a class="lk" style="left:571px">RFQ015 - RFQLin...</a><div class="exti" style="left:667.65px"><svg class="ext" width="10" height="10" viewBox="0 0 10 10"><path d="M3.9 1.4H1.9A1 1 0 0 0 0.9 2.4V8.4A1 1 0 0 0 1.9 9.4H7.9A1 1 0 0 0 8.9 8.4V6.4" fill="none" stroke="currentColor" stroke-width="1.15" stroke-linecap="round"/><path d="M4.2 6.1L8.6 1.7" stroke="currentColor" stroke-width="1.15" stroke-linecap="round"/><path d="M5.6 0.9H9.4V4.7Z" fill="currentColor"/></svg></div>
<a class="lk" style="left:701.5px;letter-spacing:0.11px">PO015 - POLine0...</a><div class="exti" style="left:798.25px"><svg class="ext" width="10" height="10" viewBox="0 0 10 10"><path d="M3.9 1.4H1.9A1 1 0 0 0 0.9 2.4V8.4A1 1 0 0 0 1.9 9.4H7.9A1 1 0 0 0 8.9 8.4V6.4" fill="none" stroke="currentColor" stroke-width="1.15" stroke-linecap="round"/><path d="M4.2 6.1L8.6 1.7" stroke="currentColor" stroke-width="1.15" stroke-linecap="round"/><path d="M5.6 0.9H9.4V4.7Z" fill="currentColor"/></svg></div>
<div class="mat"><a class="lk2">Product15</a><div class="desc">Product 15 Camera</div></div>
<div class="dia"><svg width="16" height="16" viewBox="0 0 16 16"><path d="M7.1 1.7Q8 0.8 8.9 1.7L14.3 7.1Q15.2 8 14.3 8.9L8.9 14.3Q8 15.2 7.1 14.3L1.7 8.9Q0.8 8 1.7 7.1Z" fill="none" stroke="#16191f" stroke-width="1.75" stroke-linejoin="round"/><path d="M8 4.9V8.7" stroke="#16191f" stroke-width="1.45" stroke-linecap="round"/><circle cx="8" cy="11" r="0.85" fill="#16191f"/></svg></div>
<div class="ic"><svg width="16" height="16" viewBox="0 0 16 16"><path d="M4.5 1.4V6.6M1.9 4H7.1" stroke="#033a57" stroke-width="1.5"/><path d="M9.6 4.6H13.1A1 1 0 0 1 14.1 5.6V10.4A1 1 0 0 1 13.1 11.4H12.1L10.9 12.8L9.7 11.4H5.6A1 1 0 0 1 4.6 10.4V8.4" fill="none" stroke="#033a57" stroke-width="1.6" stroke-linejoin="round"/></svg></div>
<div class="qty"><div class="q1">10</div><div class="q2">eaches</div></div>
<div class="src"><div class="s1">UAT Partne</div><div class="s2">DDP</div></div>
</div>
<div class="row" style="top:555px;height:38.60000000000002px">
<div class="badge"><svg width="17" height="15" viewBox="0 0 17 15" style="display:block"><path d="M6.3 4.7L8.9 2.8V9.3" fill="none" stroke="#fff" stroke-width="1.55" stroke-linejoin="round"/></svg></div>
<a class="lk" style="left:63.7px;letter-spacing:0.12px">WorkOrder100</a><div class="exti" style="left:137.55px"><svg class="ext" width="10" height="10" viewBox="0 0 10 10"><path d="M3.9 1.4H1.9A1 1 0 0 0 0.9 2.4V8.4A1 1 0 0 0 1.9 9.4H7.9A1 1 0 0 0 8.9 8.4V6.4" fill="none" stroke="currentColor" stroke-width="1.15" stroke-linecap="round"/><path d="M4.2 6.1L8.6 1.7" stroke="currentColor" stroke-width="1.15" stroke-linecap="round"/><path d="M5.6 0.9H9.4V4.7Z" fill="currentColor"/></svg></div>
<span class="tx" style="left:248px">Site8 description</span>
<span class="tx" style="left:371px">Campaig...</span>
<a class="lk" style="left:440px">PR105 - PRLine105</a><div class="exti" style="left:533.85px"><svg class="ext" width="10" height="10" viewBox="0 0 10 10"><path d="M3.9 1.4H1.9A1 1 0 0 0 0.9 2.4V8.4A1 1 0 0 0 1.9 9.4H7.9A1 1 0 0 0 8.9 8.4V6.4" fill="none" stroke="currentColor" stroke-width="1.15" stroke-linecap="round"/><path d="M4.2 6.1L8.6 1.7" stroke="currentColor" stroke-width="1.15" stroke-linecap="round"/><path d="M5.6 0.9H9.4V4.7Z" fill="currentColor"/></svg></div>
<a class="lk" style="left:571px">RFQ105 - RFQLin...</a><div class="exti" style="left:667.65px"><svg class="ext" width="10" height="10" viewBox="0 0 10 10"><path d="M3.9 1.4H1.9A1 1 0 0 0 0.9 2.4V8.4A1 1 0 0 0 1.9 9.4H7.9A1 1 0 0 0 8.9 8.4V6.4" fill="none" stroke="currentColor" stroke-width="1.15" stroke-linecap="round"/><path d="M4.2 6.1L8.6 1.7" stroke="currentColor" stroke-width="1.15" stroke-linecap="round"/><path d="M5.6 0.9H9.4V4.7Z" fill="currentColor"/></svg></div>
<a class="lk" style="left:701.5px;letter-spacing:0.11px">PO105 - POLine1...</a><div class="exti" style="left:798.25px"><svg class="ext" width="10" height="10" viewBox="0 0 10 10"><path d="M3.9 1.4H1.9A1 1 0 0 0 0.9 2.4V8.4A1 1 0 0 0 1.9 9.4H7.9A1 1 0 0 0 8.9 8.4V6.4" fill="none" stroke="currentColor" stroke-width="1.15" stroke-linecap="round"/><path d="M4.2 6.1L8.6 1.7" stroke="currentColor" stroke-width="1.15" stroke-linecap="round"/><path d="M5.6 0.9H9.4V4.7Z" fill="currentColor"/></svg></div>
<div class="mat"><a class="lk2">Product105</a><div class="desc">Product 105 description</div></div>
<div class="dia"><svg width="16" height="16" viewBox="0 0 16 16"><path d="M7.1 1.7Q8 0.8 8.9 1.7L14.3 7.1Q15.2 8 14.3 8.9L8.9 14.3Q8 15.2 7.1 14.3L1.7 8.9Q0.8 8 1.7 7.1Z" fill="none" stroke="#16191f" stroke-width="1.75" stroke-linejoin="round"/><path d="M8 4.9V8.7" stroke="#16191f" stroke-width="1.45" stroke-linecap="round"/><circle cx="8" cy="11" r="0.85" fill="#16191f"/></svg></div>
<div class="ic"><svg width="16" height="16" viewBox="0 0 16 16"><path d="M4.5 1.4V6.6M1.9 4H7.1" stroke="#033a57" stroke-width="1.5"/><path d="M9.6 4.6H13.1A1 1 0 0 1 14.1 5.6V10.4A1 1 0 0 1 13.1 11.4H12.1L10.9 12.8L9.7 11.4H5.6A1 1 0 0 1 4.6 10.4V8.4" fill="none" stroke="#033a57" stroke-width="1.6" stroke-linejoin="round"/></svg></div>
<div class="qty"><div class="q1">100</div><div class="q2">eaches</div></div>
<div class="src"><div class="s1">UAT Partne</div><div class="s2">DDP</div></div>
</div>
<div class="row" style="top:593.6px;height:39.0px">
<div class="badge"><svg width="17" height="15" viewBox="0 0 17 15" style="display:block"><path d="M6.3 4.7L8.9 2.8V9.3" fill="none" stroke="#fff" stroke-width="1.55" stroke-linejoin="round"/></svg></div>
<a class="lk" style="left:63.7px;letter-spacing:0.12px">WorkOrder101</a><div class="exti" style="left:137.55px"><svg class="ext" width="10" height="10" viewBox="0 0 10 10"><path d="M3.9 1.4H1.9A1 1 0 0 0 0.9 2.4V8.4A1 1 0 0 0 1.9 9.4H7.9A1 1 0 0 0 8.9 8.4V6.4" fill="none" stroke="currentColor" stroke-width="1.15" stroke-linecap="round"/><path d="M4.2 6.1L8.6 1.7" stroke="currentColor" stroke-width="1.15" stroke-linecap="round"/><path d="M5.6 0.9H9.4V4.7Z" fill="currentColor"/></svg></div>
<span class="tx" style="left:248px">Site8 description</span>
<span class="tx" style="left:371px">Campaig...</span>
<a class="lk" style="left:440px">PR106 - PRLine106</a><div class="exti" style="left:533.85px"><svg class="ext" width="10" height="10" viewBox="0 0 10 10"><path d="M3.9 1.4H1.9A1 1 0 0 0 0.9 2.4V8.4A1 1 0 0 0 1.9 9.4H7.9A1 1 0 0 0 8.9 8.4V6.4" fill="none" stroke="currentColor" stroke-width="1.15" stroke-linecap="round"/><path d="M4.2 6.1L8.6 1.7" stroke="currentColor" stroke-width="1.15" stroke-linecap="round"/><path d="M5.6 0.9H9.4V4.7Z" fill="currentColor"/></svg></div>
<a class="lk" style="left:571px">RFQ106 - RFQLin...</a><div class="exti" style="left:667.65px"><svg class="ext" width="10" height="10" viewBox="0 0 10 10"><path d="M3.9 1.4H1.9A1 1 0 0 0 0.9 2.4V8.4A1 1 0 0 0 1.9 9.4H7.9A1 1 0 0 0 8.9 8.4V6.4" fill="none" stroke="currentColor" stroke-width="1.15" stroke-linecap="round"/><path d="M4.2 6.1L8.6 1.7" stroke="currentColor" stroke-width="1.15" stroke-linecap="round"/><path d="M5.6 0.9H9.4V4.7Z" fill="currentColor"/></svg></div>
<a class="lk" style="left:701.5px;letter-spacing:0.11px">PO106 - POLine1...</a><div class="exti" style="left:798.25px"><svg class="ext" width="10" height="10" viewBox="0 0 10 10"><path d="M3.9 1.4H1.9A1 1 0 0 0 0.9 2.4V8.4A1 1 0 0 0 1.9 9.4H7.9A1 1 0 0 0 8.9 8.4V6.4" fill="none" stroke="currentColor" stroke-width="1.15" stroke-linecap="round"/><path d="M4.2 6.1L8.6 1.7" stroke="currentColor" stroke-width="1.15" stroke-linecap="round"/><path d="M5.6 0.9H9.4V4.7Z" fill="currentColor"/></svg></div>
<div class="mat"><a class="lk2">Product106</a><div class="desc">Product 106 description</div></div>
<div class="dia"><svg width="16" height="16" viewBox="0 0 16 16"><path d="M7.1 1.7Q8 0.8 8.9 1.7L14.3 7.1Q15.2 8 14.3 8.9L8.9 14.3Q8 15.2 7.1 14.3L1.7 8.9Q0.8 8 1.7 7.1Z" fill="none" stroke="#16191f" stroke-width="1.75" stroke-linejoin="round"/><path d="M8 4.9V8.7" stroke="#16191f" stroke-width="1.45" stroke-linecap="round"/><circle cx="8" cy="11" r="0.85" fill="#16191f"/></svg></div>
<div class="ic"><svg width="16" height="16" viewBox="0 0 16 16"><path d="M4.5 1.4V6.6M1.9 4H7.1" stroke="#033a57" stroke-width="1.5"/><path d="M9.6 4.6H13.1A1 1 0 0 1 14.1 5.6V10.4A1 1 0 0 1 13.1 11.4H12.1L10.9 12.8L9.7 11.4H5.6A1 1 0 0 1 4.6 10.4V8.4" fill="none" stroke="#033a57" stroke-width="1.6" stroke-linejoin="round"/></svg></div>
<div class="qty"><div class="q1">101</div><div class="q2">eaches</div></div>
<div class="src"><div class="s1">UAT Partne</div><div class="s2">DDP</div></div>
</div>
<div class="row" style="top:632.6px;height:38.60000000000002px">
<div class="badge"><svg width="17" height="15" viewBox="0 0 17 15" style="display:block"><path d="M6.3 4.7L8.9 2.8V9.3" fill="none" stroke="#fff" stroke-width="1.55" stroke-linejoin="round"/></svg></div>
<a class="lk" style="left:63.7px;letter-spacing:0.12px">WorkOrder102</a><div class="exti" style="left:137.55px"><svg class="ext" width="10" height="10" viewBox="0 0 10 10"><path d="M3.9 1.4H1.9A1 1 0 0 0 0.9 2.4V8.4A1 1 0 0 0 1.9 9.4H7.9A1 1 0 0 0 8.9 8.4V6.4" fill="none" stroke="currentColor" stroke-width="1.15" stroke-linecap="round"/><path d="M4.2 6.1L8.6 1.7" stroke="currentColor" stroke-width="1.15" stroke-linecap="round"/><path d="M5.6 0.9H9.4V4.7Z" fill="currentColor"/></svg></div>
<span class="tx" style="left:248px">Site8 description</span>
<span class="tx" style="left:371px">Campaig...</span>
<a class="lk" style="left:440px">PR107 - PRLine107</a><div class="exti" style="left:533.85px"><svg class="ext" width="10" height="10" viewBox="0 0 10 10"><path d="M3.9 1.4H1.9A1 1 0 0 0 0.9 2.4V8.4A1 1 0 0 0 1.9 9.4H7.9A1 1 0 0 0 8.9 8.4V6.4" fill="none" stroke="currentColor" stroke-width="1.15" stroke-linecap="round"/><path d="M4.2 6.1L8.6 1.7" stroke="currentColor" stroke-width="1.15" stroke-linecap="round"/><path d="M5.6 0.9H9.4V4.7Z" fill="currentColor"/></svg></div>
<a class="lk" style="left:571px">RFQ107 - RFQLin...</a><div class="exti" style="left:667.65px"><svg class="ext" width="10" height="10" viewBox="0 0 10 10"><path d="M3.9 1.4H1.9A1 1 0 0 0 0.9 2.4V8.4A1 1 0 0 0 1.9 9.4H7.9A1 1 0 0 0 8.9 8.4V6.4" fill="none" stroke="currentColor" stroke-width="1.15" stroke-linecap="round"/><path d="M4.2 6.1L8.6 1.7" stroke="currentColor" stroke-width="1.15" stroke-linecap="round"/><path d="M5.6 0.9H9.4V4.7Z" fill="currentColor"/></svg></div>
<a class="lk" style="left:701.5px;letter-spacing:0.11px">PO107 - POLine1...</a><div class="exti" style="left:798.25px"><svg class="ext" width="10" height="10" viewBox="0 0 10 10"><path d="M3.9 1.4H1.9A1 1 0 0 0 0.9 2.4V8.4A1 1 0 0 0 1.9 9.4H7.9A1 1 0 0 0 8.9 8.4V6.4" fill="none" stroke="currentColor" stroke-width="1.15" stroke-linecap="round"/><path d="M4.2 6.1L8.6 1.7" stroke="currentColor" stroke-width="1.15" stroke-linecap="round"/><path d="M5.6 0.9H9.4V4.7Z" fill="currentColor"/></svg></div>
<div class="mat"><a class="lk2">Product107</a><div class="desc">Product 107 description</div></div>
<div class="dia"><svg width="16" height="16" viewBox="0 0 16 16"><path d="M7.1 1.7Q8 0.8 8.9 1.7L14.3 7.1Q15.2 8 14.3 8.9L8.9 14.3Q8 15.2 7.1 14.3L1.7 8.9Q0.8 8 1.7 7.1Z" fill="none" stroke="#16191f" stroke-width="1.75" stroke-linejoin="round"/><path d="M8 4.9V8.7" stroke="#16191f" stroke-width="1.45" stroke-linecap="round"/><circle cx="8" cy="11" r="0.85" fill="#16191f"/></svg></div>
<div class="ic"><svg width="16" height="16" viewBox="0 0 16 16"><path d="M4.5 1.4V6.6M1.9 4H7.1" stroke="#033a57" stroke-width="1.5"/><path d="M9.6 4.6H13.1A1 1 0 0 1 14.1 5.6V10.4A1 1 0 0 1 13.1 11.4H12.1L10.9 12.8L9.7 11.4H5.6A1 1 0 0 1 4.6 10.4V8.4" fill="none" stroke="#033a57" stroke-width="1.6" stroke-linejoin="round"/></svg></div>
<div class="qty"><div class="q1">102</div><div class="q2">eaches</div></div>
<div class="src"><div class="s1">UAT Partne</div><div class="s2">DDP</div></div>
</div>

<div class="abs" style="left:79px;top:243px;width:1px;height:429px;background:#d3d8de"></div>
<!-- pagination -->
<div class="abs" style="left:79px;top:677px;width:139px;height:30px;border:1px solid #7d8998;border-radius:6px;background:#fff"></div>
<div class="abs" style="left:90px;top:685px;font-size:11.6px;line-height:14px;color:#4f5b6a;white-space:nowrap">Rows per page</div>
<div class="abs" style="left:174.5px;top:683px;width:1px;height:18px;background:#e3e6ea"></div>
<div class="abs" style="left:181.5px;top:687px;font-size:10.4px;line-height:12px;color:#16191f">20</div>
<svg class="abs" style="left:203px;top:689px" width="8" height="7" viewBox="0 0 8 7"><path d="M1.4 1.8L4 4.4L6.6 1.8" fill="none" stroke="#16191f" stroke-width="1.5"/></svg>
<div class="abs" style="left:1266px;top:687px;font-size:10.6px;line-height:12px;color:#16191f;white-space:nowrap">1–20 of 414</div>
<svg class="abs" style="left:1347px;top:689px" width="7" height="8" viewBox="0 0 7 8"><path d="M4.8 1.2L2.2 4L4.8 6.8" fill="none" stroke="#b8bfc7" stroke-width="1.2"/></svg>
<svg class="abs" style="left:1374px;top:689px" width="7" height="8" viewBox="0 0 7 8"><path d="M2.2 1.2L4.8 4L2.2 6.8" fill="none" stroke="#16191f" stroke-width="1.4"/></svg>

<div class="abs" style="left:0;top:710px;width:1437px;height:20px;background:#fff"></div>
<div class="abs" style="left:48px;top:724px;width:1px;height:6px;background:#e4e8ec"></div>
<div class="abs" style="left:1423px;top:724px;width:1px;height:6px;background:#e4e8ec"></div>
</body></html>
